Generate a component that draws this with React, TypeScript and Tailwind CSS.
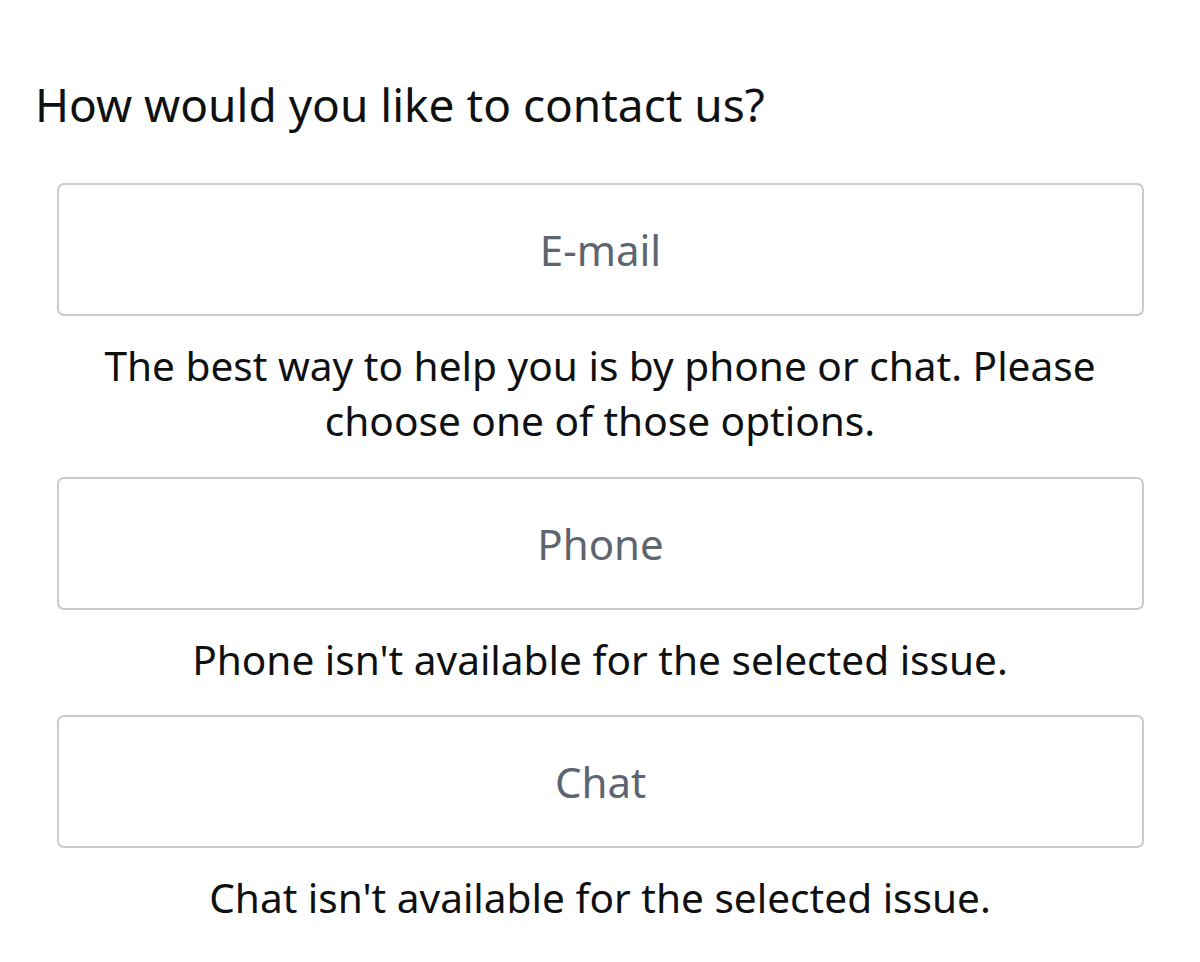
const font = { fontFamily: '"Noto Sans", "Open Sans", sans-serif' };

function Option({ label }: { label: string }) {
  return (
    <div
      role="button"
      className="ml-[57px] mr-[56px] flex h-[133px] items-center justify-center rounded-[7px] border-2 border-[#c8cbcf] bg-white text-[42px] text-[#5d6570]"
    >
      {label}
    </div>
  );
}

function Note({ children }: { children: React.ReactNode }) {
  return <p className="mx-[57px] mt-[22px] text-center text-[40.6px] leading-[55px]">{children}</p>;
}

export default function App() {
  return (
    <div className="min-h-[962px] w-[1200px] bg-white text-[#0f1111]" style={font}>
      <h1 className="pl-[35px] pt-[76px] text-[46px] leading-[56px] font-normal">How would you like to contact us?</h1>
      <div className="mt-[51px] flex flex-col">
        <Option label="E-mail" />
        <Note>The best way to help you is by phone or chat. Please choose one of those options.</Note>
        <div className="mt-[29px]">
          <Option label="Phone" />
        </div>
        <Note>Phone isn't available for the selected issue.</Note>
        <div className="mt-[28px]">
          <Option label="Chat" />
        </div>
        <Note>Chat isn't available for the selected issue.</Note>
      </div>
    </div>
  );
}
